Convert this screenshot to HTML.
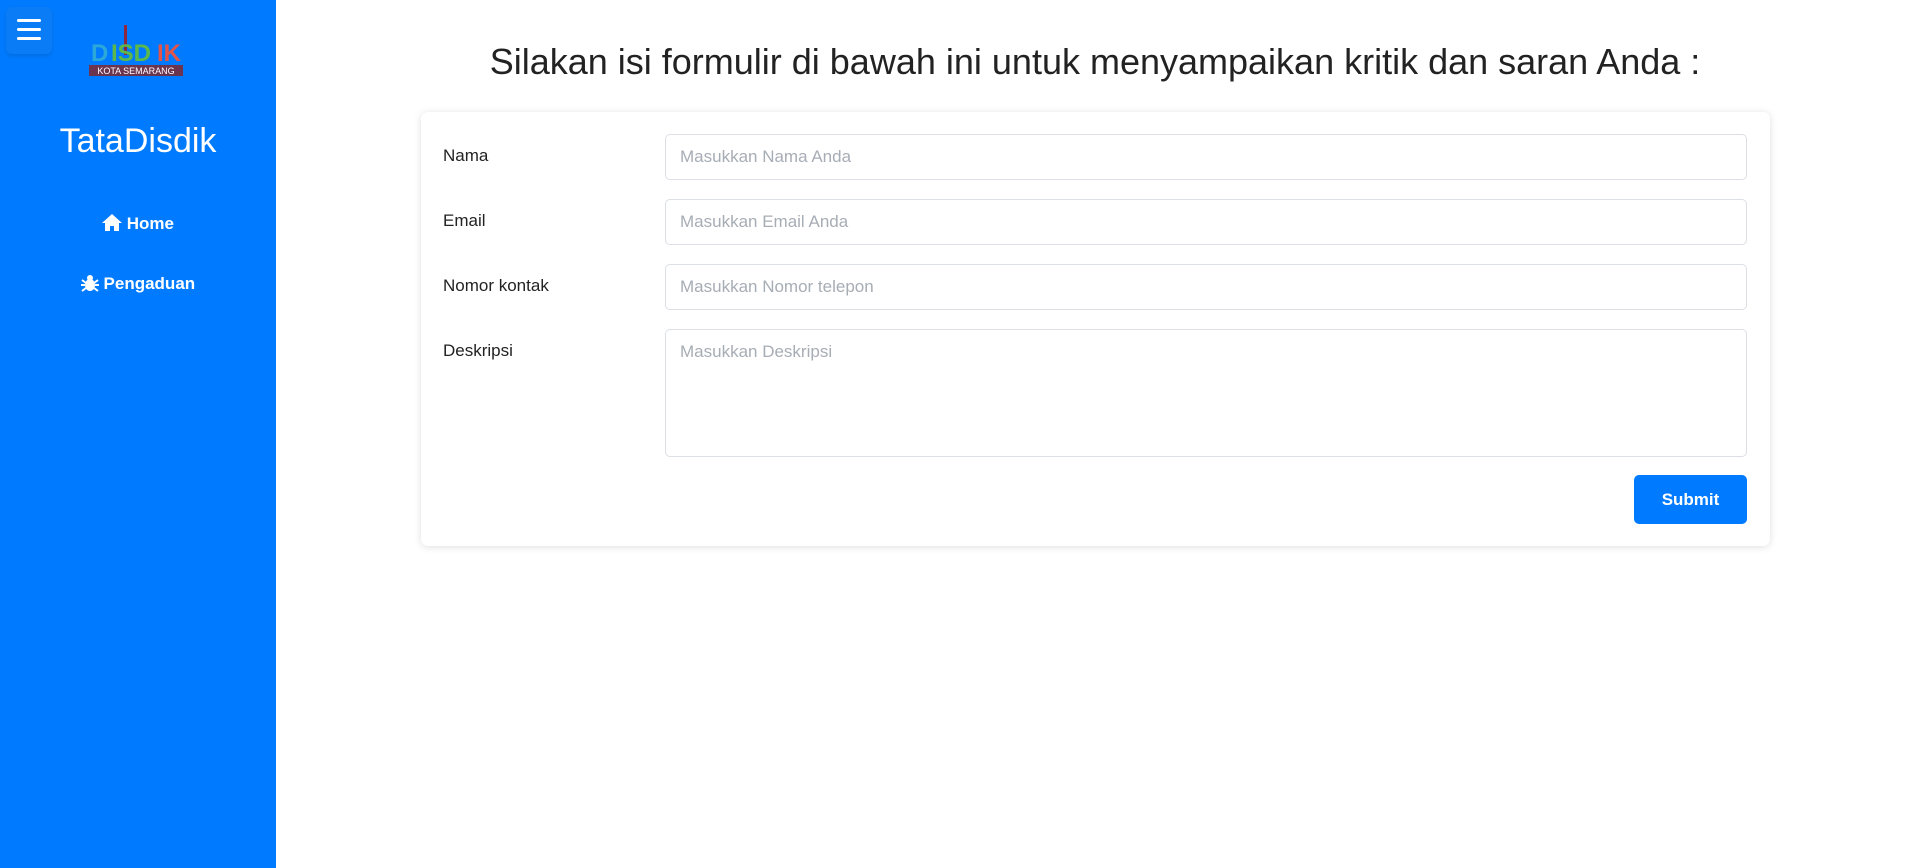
<!DOCTYPE html>
<html><head><meta charset="utf-8"><style>
*{box-sizing:border-box;margin:0;padding:0}
body{width:1914px;height:868px;background:#fff;font-family:"Liberation Sans",sans-serif;position:relative;overflow:hidden}
.sb{position:absolute;left:0;top:0;width:276px;height:868px;background:#007bff}
.hb{position:absolute;left:6px;top:7px;width:46px;height:47px;border-radius:6px;background:#0a7cf5;box-shadow:0 2px 4px rgba(0,0,0,.12)}
.hb i{position:absolute;left:11px;width:24px;height:3px;background:#fff;border-radius:2px}
.logo{position:absolute;left:89px;top:23px;width:94px;height:54px}
.brand{position:absolute;left:0;width:276px;top:122px;text-align:center;color:#fff;font-size:34px}
.nav{position:absolute;left:0;width:276px;text-align:center;color:#fff;font-size:17px;font-weight:bold}
h1{position:absolute;left:276px;width:1638px;top:41px;text-align:center;font-weight:normal;font-size:36px;color:#222}
.card{position:absolute;left:421px;top:112px;width:1349px;height:434px;border-radius:7px;box-shadow:0 1px 8px rgba(0,0,0,.13);background:#fff}
.lbl{position:absolute;left:443px;font-size:17px;color:#222}
.in{position:absolute;left:665px;width:1082px;border:1px solid #dcdfe4;border-radius:5px;color:#a7adb5;font-size:17px;padding:12px 14px}
.btn{position:absolute;left:1634px;top:475px;width:113px;height:49px;background:#007bff;border-radius:5px;color:#fff;font-weight:bold;font-size:17px;text-align:center;line-height:49px}
</style></head><body>
<div class="sb">
<div class="hb"><i style="top:12px"></i><i style="top:21px"></i><i style="top:30px"></i></div>
<svg class="logo" viewBox="0 0 94 54">
<rect x="35" y="2" width="3" height="30" fill="#8b2840"/>
<text x="2" y="38" font-size="24" font-weight="bold" font-family="Liberation Sans" fill="#2ba7d8">D</text>
<text x="22" y="38" font-size="24" font-weight="bold" font-family="Liberation Sans" fill="#5cb84a">ISD</text>
<text x="68" y="38" font-size="24" font-weight="bold" font-family="Liberation Sans" fill="#e2534a">IK</text>
<rect x="0" y="42" width="94" height="11" fill="#6b3550"/>
<text x="47" y="51" text-anchor="middle" font-size="9" font-family="Liberation Sans" fill="#fff">KOTA SEMARANG</text>
</svg>
<div class="brand">TataDisdik</div>
<div class="nav" style="top:214px"><svg width="20" height="17" viewBox="0 0 20 17" style="vertical-align:-2px"><path d="M10 0L0 9h3v8h5v-5h4v5h5V9h3z" fill="#fff"/></svg> Home</div>
<div class="nav" style="top:274px"><svg width="18" height="18" viewBox="0 0 18 18" style="vertical-align:-3px"><circle cx="9" cy="4" r="3" fill="#fff"/><ellipse cx="9" cy="11" rx="5" ry="6" fill="#fff"/><path d="M1 6l4 3M17 6l-4 3M0 11h4M18 11h-4M1 17l4-3M17 17l-4-3" stroke="#fff" stroke-width="2"/></svg> Pengaduan</div>
</div>
<h1>Silakan isi formulir di bawah ini untuk menyampaikan kritik dan saran Anda :</h1>
<div class="card"></div>
<div class="lbl" style="top:146px">Nama</div>
<div class="lbl" style="top:211px">Email</div>
<div class="lbl" style="top:276px">Nomor kontak</div>
<div class="lbl" style="top:341px">Deskripsi</div>
<div class="in" style="top:134px;height:46px">Masukkan Nama Anda</div>
<div class="in" style="top:199px;height:46px">Masukkan Email Anda</div>
<div class="in" style="top:264px;height:46px">Masukkan Nomor telepon</div>
<div class="in" style="top:329px;height:128px">Masukkan Deskripsi</div>
<div class="btn">Submit</div>
</body></html>
